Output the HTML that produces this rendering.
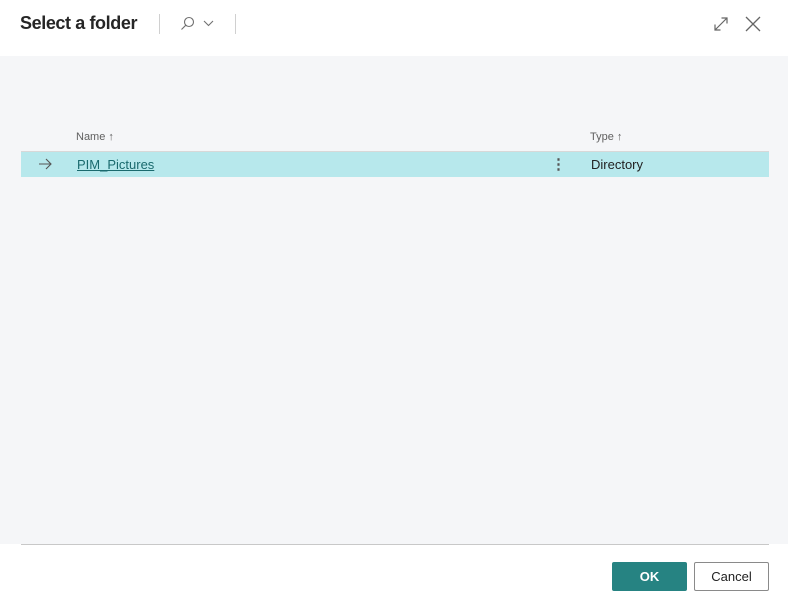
<!DOCTYPE html>
<html><head><style>
body{margin:0;width:788px;height:611px;position:relative;font-family:"Liberation Sans",sans-serif;background:#fff;overflow:hidden}
.a{position:absolute}
</style></head><body>
<div class="a" style="left:20px;top:13px;font-size:18px;font-weight:bold;color:#262626;letter-spacing:-0.4px">Select a folder</div>
<div class="a" style="left:159px;top:14px;width:1px;height:20px;background:#d0d0d0"></div>
<div class="a" style="left:235px;top:14px;width:1px;height:20px;background:#d0d0d0"></div>
<svg class="a" style="left:180px;top:15px" width="36" height="18" viewBox="0 0 36 18" fill="none" stroke="#707070" stroke-width="1.1"><circle cx="9" cy="7" r="4.5"/><path d="M5.8 10.2 1.5 14.5"/><path d="M24 6l4.5 4.5L33 6"/></svg>
<svg class="a" style="left:712px;top:15px" width="18" height="18" viewBox="0 0 18 18" fill="none" stroke="#666" stroke-width="1.2"><path d="M3 15 15 3M9.5 3H15V8.5M3 9.5V15H8.5"/></svg>
<svg class="a" style="left:744px;top:15px" width="18" height="18" viewBox="0 0 18 18" fill="none" stroke="#666" stroke-width="1.3"><path d="M2 2 16 16M16 2 2 16"/></svg>
<div class="a" style="left:0;top:56px;width:788px;height:488px;background:#f5f6f8"></div>
<div class="a" style="left:76px;top:131px;font-size:11px;color:#606060">Name ↑</div>
<div class="a" style="left:590px;top:131px;font-size:11px;color:#606060">Type ↑</div>
<div class="a" style="left:21px;top:151px;width:748px;height:1px;background:#d8d8d8"></div>
<div class="a" style="left:21px;top:152px;width:748px;height:25px;background:#b7e8ec"></div>
<svg class="a" style="left:38px;top:158px" width="14" height="12" viewBox="0 0 14 12" fill="none" stroke="#555" stroke-width="1.1"><path d="M1 6H13M8 1l5 5-5 5"/></svg>
<div class="a" style="left:77px;top:157px;font-size:13px;color:#1a6a6e;text-decoration:underline">PIM_Pictures</div>
<div class="a" style="left:551px;top:155px;font-size:15px;color:#555;font-weight:bold">⋮</div>
<div class="a" style="left:591px;top:157px;font-size:13px;color:#222">Directory</div>
<div class="a" style="left:21px;top:544px;width:748px;height:1px;background:#c8c8c8"></div>
<div class="a" style="left:612px;top:562px;width:75px;height:29px;background:#268382;border-radius:2px;color:#fff;font-weight:bold;font-size:13px;text-align:center;line-height:29px">OK</div>
<div class="a" style="left:694px;top:562px;width:73px;height:27px;border:1px solid #8a8a8a;border-radius:2px;color:#222;font-size:13px;text-align:center;line-height:27px">Cancel</div>
</body></html>
